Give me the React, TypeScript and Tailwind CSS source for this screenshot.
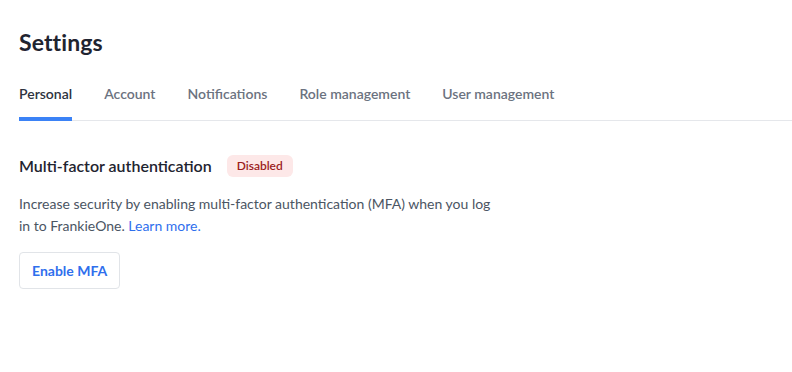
import React from 'react';

const tabs = ['Personal', 'Account', 'Notifications', 'Role management', 'User management'];

export default function App() {
  return (
    <div className="min-h-screen bg-white pl-[19px] pt-[28px] font-['Lato','Open_Sans',sans-serif] text-[#1f2430]">
      <h1 className="text-[23px] font-bold leading-[28px] tracking-[0.1px]">Settings</h1>

      {/* Tabs */}
      <nav className="mt-[29px] flex gap-[32px] border-b border-[#e5e7eb]">
        {tabs.map((t, i) => (
          <div
            key={t}
            className={
              i === 0
                ? 'pb-[13px] text-[14px] font-semibold leading-[18px] text-[#2d3340] border-b-[4px] border-[#3b82f6] -mb-px'
                : 'pb-[17px] text-[14px] font-semibold leading-[18px] text-[#6b7280]'
            }
          >
            {t}
          </div>
        ))}
      </nav>

      {/* MFA section */}
      <section className="mt-[33px] pr-[19px]">
        <div className="flex items-center gap-[15px]">
          <h2 className="text-[16px] font-semibold leading-[24px] text-[#1f2430]">Multi-factor authentication</h2>
          <span className="rounded-[6px] bg-[#fde8e8] px-[10px] py-[3px] text-[12px] font-semibold leading-[16px] text-[#9b1c1c]">
            Disabled
          </span>
        </div>
        <p className="mt-[15px] max-w-[480px] text-[14px] leading-[22px] text-[#4b5563]">
          Increase security by enabling multi-factor authentication (MFA) when you log in to FrankieOne.{' '}
          <a href="#" className="text-[#2f6fed]">Learn more.</a>
        </p>
        <button className="mt-[15px] h-[37px] rounded-[4px] border border-[#e1e4e8] bg-white px-[12px] text-[14px] font-bold text-[#2f6fed]">
          Enable MFA
        </button>
      </section>
    </div>
  );
}
